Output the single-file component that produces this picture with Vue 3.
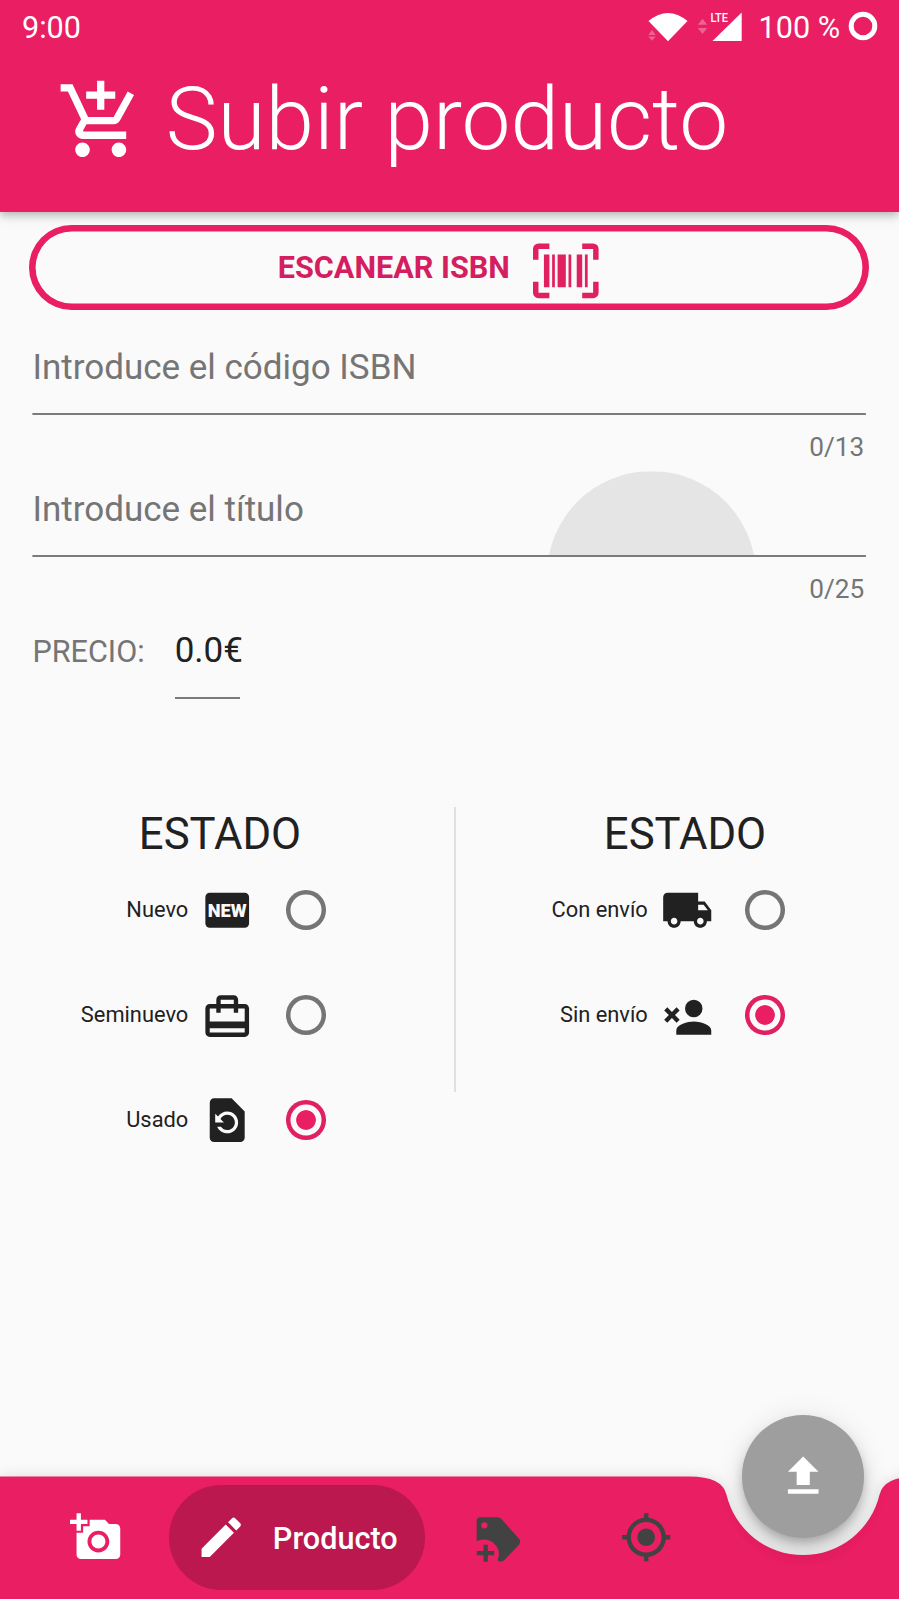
<script setup>
import { ref } from 'vue'

const condition = ref('usado')
const delivery = ref('sin')

const icons = {
  cart: 'M11 9h2V6h3V4h-3V1h-2v3H8v2h3v3zm-4 9c-1.1 0-1.99.9-1.99 2S5.9 22 7 22s2-.9 2-2-.9-2-2-2zm10 0c-1.1 0-1.99.9-1.99 2s.89 2 1.99 2 2-.9 2-2-.9-2-2-2zm-9.83-3.25l.03-.12.9-1.63h7.45c.75 0 1.41-.41 1.75-1.03l3.86-7.01L19.42 4h-.01l-1.1 2-2.76 5H8.53l-.13-.27L6.16 6l-.95-2-.94-2H1v2h2l3.6 7.59-1.35 2.45c-.16.28-.25.61-.25.96 0 1.1.9 2 2 2h12v-2H7.42c-.13 0-.25-.11-.25-.25z',
  barcode: 'M4,6H6V18H4V6M7,6H8V18H7V6M9,6H12V18H9V6M13,6H14V18H13V6M16,6H18V18H16V6M19,6H20V18H19V6M2,4V8H0V4A2,2 0 0,1 2,2H6V4H2M22,2A2,2 0 0,1 24,4V8H22V4H18V2H22M2,16V20H6V22H2A2,2 0 0,1 0,20V16H2M22,20V16H24V20A2,2 0 0,1 22,22H18V20H22Z',
  suitcase: 'M20 6h-3V4c0-1.11-.89-2-2-2H9c-1.11 0-2 .89-2 2v2H4c-1.11 0-2 .89-2 2v11c0 1.11.89 2 2 2h16c1.11 0 2-.89 2-2V8c0-1.11-.89-2-2-2zM9 4h6v2H9V4zm11 15H4v-2h16v2zm0-5H4V8h3v2h2V8h6v2h2V8h3v6z',
  restore: 'M14 2H6c-1.1 0-1.99.9-1.99 2L4 20c0 1.1.89 2 1.99 2H18c1.1 0 2-.9 2-2V8l-6-6zm-2 16c-2.05 0-3.81-1.24-4.58-3h1.71c.63.9 1.68 1.5 2.87 1.5 1.93 0 3.5-1.57 3.5-3.5S13.93 9.5 12 9.5c-1.35 0-2.52.78-3.1 1.9l1.6 1.6h-4V9l1.3 1.3C8.69 8.92 10.23 8 12 8c2.76 0 5 2.24 5 5s-2.24 5-5 5z',
  truck: 'M20 8h-3V4H3c-1.1 0-2 .9-2 2v11h2c0 1.66 1.34 3 3 3s3-1.34 3-3h6c0 1.66 1.34 3 3 3s3-1.34 3-3h2v-5l-3-4zM6 18.5c-.83 0-1.5-.67-1.5-1.5s.67-1.5 1.5-1.5 1.5.67 1.5 1.5-.67 1.5-1.5 1.5zm13.5-9l1.96 2.5H17V9.5h2.5zm-1.5 9c-.83 0-1.5-.67-1.5-1.5s.67-1.5 1.5-1.5 1.5.67 1.5 1.5-.67 1.5-1.5 1.5z',
  personRemove: 'M15,14C12.33,14 7,15.33 7,18V20H23V18C23,15.33 17.67,14 15,14M15,12A4,4 0 0,0 19,8A4,4 0 0,0 15,4A4,4 0 0,0 11,8A4,4 0 0,0 15,12M5,9.59L7.12,7.46L8.54,8.88L6.41,11L8.54,13.12L7.12,14.54L5,12.41L2.88,14.54L1.46,13.12L3.59,11L1.46,8.88L2.88,7.46L5,9.59Z',
  camera: 'M3 4V1h2v3h3v2H5v3H3V6H0V4h3zm3 6V7h3V4h7l1.83 2H21c1.1 0 2 .9 2 2v12c0 1.1-.9 2-2 2H5c-1.1 0-2-.9-2-2V10h3zm7 9c2.76 0 5-2.24 5-5s-2.24-5-5-5-5 2.24-5 5 2.24 5 5 5zm-3.2-5c0 1.77 1.43 3.2 3.2 3.2s3.2-1.43 3.2-3.2-1.43-3.2-3.2-3.2-3.2 1.43-3.2 3.2z',
  pencil: 'M3 17.25V21h3.75L17.81 9.94l-3.75-3.75L3 17.25zM20.71 7.04c.39-.39.39-1.02 0-1.41l-2.34-2.34c-.39-.39-1.02-.39-1.41 0l-1.83 1.83 3.75 3.75 1.83-1.83z',
  location: 'M12 8c-2.21 0-4 1.79-4 4s1.79 4 4 4 4-1.79 4-4-1.79-4-4-4zm8.94 3c-.46-4.17-3.77-7.48-7.94-7.94V1h-2v2.06C6.83 3.52 3.52 6.83 3.06 11H1v2h2.06c.46 4.17 3.77 7.48 7.94 7.94V23h2v-2.06c4.17-.46 7.48-3.77 7.94-7.94H23v-2h-2.06zM12 19c-3.87 0-7-3.13-7-7s3.13-7 7-7 7 3.13 7 7-3.13 7-7 7z',
  upload: 'M5 20h14v-2H5v2zm0-10h4v6h6v-6h4l-7-7-7 7z'
}

const conditions = [
  { id: 'nuevo', label: 'Nuevo', icon: null },
  { id: 'seminuevo', label: 'Seminuevo', icon: icons.suitcase, low: true },
  { id: 'usado', label: 'Usado', icon: icons.restore }
]
const deliveries = [
  { id: 'con', label: 'Con envío', icon: icons.truck },
  { id: 'sin', label: 'Sin envío', icon: icons.personRemove, low: true }
]
</script>

<template>
  <div class="screen">
    <header class="header">
      <div class="status">
        <span class="clock">9:00</span>
        <svg class="signals" width="104" height="40" viewBox="644 6 104 40">
          <path d="M648.5 21Q668 5 687.5 21L668 41.3Z" fill="#fff" />
          <path d="M648.3 35l3.7-5 3.7 5zM648.3 36.5h7.4l-3.7 4.3zM697.8 24.7l4.7-6 4.7 6zM697.8 28h9.4l-4.7 6z" fill="#fff" opacity=".3" />
          <path d="M741.7 12.5V41H712.5Z" fill="#fff" />
          <text class="lte" x="710.5" y="22.3" textLength="17.5" lengthAdjust="spacingAndGlyphs">LTE</text>
        </svg>
        <span class="battery">100 %</span>
        <svg class="ring" width="30" height="30" viewBox="0 0 30 30">
          <circle cx="15" cy="15" r="11.8" fill="none" stroke="#fff" stroke-width="5" />
        </svg>
      </div>
      <div class="heading">
        <svg class="cart" viewBox="0 0 24 24"><path :d="icons.cart" /></svg>
        <h1>Subir producto</h1>
      </div>
    </header>

    <main class="body">
      <button class="scan">
        <span>ESCANEAR ISBN</span>
        <svg viewBox="0 0 24 24"><path :d="icons.barcode" /></svg>
      </button>

      <div class="field">
        <div class="input"><span class="isbn-hint">Introduce el código ISBN</span></div>
        <div class="counter">0/13</div>
      </div>
      <div class="field">
        <div class="input">
          <i class="ripple"></i>
          <span class="title-hint">Introduce el título</span>
        </div>
        <div class="counter">0/25</div>
      </div>
      <div class="price">
        <label>PRECIO:</label>
        <div class="amount">0.0€</div>
      </div>

      <div class="options">
        <section class="group">
          <h2>ESTADO</h2>
          <div v-for="o in conditions" :key="o.id" class="option" @click="condition = o.id">
            <span class="label">{{ o.label }}</span>
            <svg v-if="o.icon" class="icon" :class="{ low: o.low }" viewBox="0 0 24 24"><path :d="o.icon" /></svg>
            <svg v-else class="icon" viewBox="0 0 24 24">
              <rect x="2" y="4" width="20" height="16" rx="2" />
              <text class="new" x="3.1" y="15" textLength="17.8" lengthAdjust="spacingAndGlyphs">NEW</text>
            </svg>
            <i class="radio" :class="{ on: condition === o.id }"></i>
          </div>
        </section>
        <div class="divider"></div>
        <section class="group delivery">
          <h2>ESTADO</h2>
          <div v-for="o in deliveries" :key="o.id" class="option" @click="delivery = o.id">
            <span class="label">{{ o.label }}</span>
            <svg class="icon" :class="{ low: o.low }" viewBox="0 0 24 24"><path :d="o.icon" /></svg>
            <i class="radio" :class="{ on: delivery === o.id }"></i>
          </div>
        </section>
      </div>
    </main>

    <footer class="bar">
      <svg class="bar-shape" viewBox="0 0 899 123">
        <path d="M0 .5H689.4Q722.15 .5 726.5 18.7A78.66 78.66 0 0 0 879.5 18.7Q883.85 .5 916.6 .5V123H0Z" />
      </svg>
      <nav class="nav">
        <svg class="nav-icon light" viewBox="0 0 24 24"><path :d="icons.camera" /></svg>
        <div class="selected">
          <svg class="nav-icon light" viewBox="0 0 24 24"><path :d="icons.pencil" /></svg>
          <span>Producto</span>
        </div>
        <svg class="nav-icon tag" viewBox="66 334 157.3 157.3">
          <path fill-rule="evenodd" d="M92 353H142Q149 353 154 358L207 417Q214 426 207 435L164 480Q155 489 145 484Q142 480 145 473Q150 459 141 442Q130 424 110 420Q94 418 80 424V365Q80 353 92 353ZM103 367.500A9.500 9.500 0 1 0 103 386.500A9.500 9.500 0 1 0 103 367.500Z" />
          <path d="M100.500 435h13v19h19v13h-19v19h-13v-19h-20v-13h20z" />
        </svg>
        <svg class="nav-icon locate" viewBox="0 0 24 24"><path :d="icons.location" /></svg>
      </nav>
      <button class="fab">
        <svg viewBox="0 0 24 24"><path :d="icons.upload" /></svg>
      </button>
    </footer>
  </div>
</template>

<style>
body {
  margin: 0;
  background: #fafafa;
}
</style>

<style scoped>
.screen {
  width: 899px;
  height: 1599px;
  display: flex;
  flex-direction: column;
  overflow: hidden;
  background: #fafafa;
  color: #212121;
  font-family: Roboto, "Noto Sans", sans-serif;
}
button {
  font: inherit;
  margin: 0;
  cursor: pointer;
}
.header {
  height: 212px;
  flex: none;
  box-sizing: border-box;
  background: #e91e63;
  color: #fff;
  box-shadow: 0 3px 8px rgba(0, 0, 0, 0.24), 0 8px 12px rgba(0, 0, 0, 0.05);
}
.status {
  height: 54px;
  display: flex;
  align-items: center;
  padding: 0 21px 0 22px;
  font-size: 30.6px;
  line-height: 56px;
}
.clock {
  flex: 1;
  padding-top: 2px;
}
.battery {
  width: 81px;
  margin-left: 10.500px;
  padding-top: 2px;
  white-space: nowrap;
}
.signals {
  margin-top: -2px;
}
.ring {
  margin: -2px 0 0 8.500px;
}
.lte {
  fill: #fff;
  font-size: 13.500px;
  font-weight: 500;
}
.heading {
  display: flex;
  align-items: center;
  padding-left: 57.200px;
  height: 134px;
}
.cart {
  width: 87.4px;
  height: 87.4px;
  fill: #fff;
}
h1 {
  margin: -4px 0 0 21.200px;
  font-size: 87.4px;
  line-height: 100px;
  font-weight: 300;
  white-space: nowrap;
}
.body {
  flex: 1;
  padding: 12.800px 30px 0 29px;
}
.scan {
  width: 840px;
  height: 85px;
  box-sizing: border-box;
  display: flex;
  align-items: center;
  padding: 0 0 0 248.800px;
  border: 0;
  border-radius: 43px;
  box-shadow: inset 0 0 0 6.600px #e91e63;
  background: transparent;
  color: #d41e60;
  font-size: 30.6px;
  font-weight: 700;
}
.scan svg {
  width: 65.600px;
  height: 65.600px;
  margin: 6px 0 0 23.500px;
  fill: #e0205f;
}
.scan span {
  white-space: nowrap;
}
.field,
.price {
  margin-left: 3.400px;
}
.field {
  width: 833.500px;
  height: 142px;
  color: #757575;
}
.scan + .field {
  margin-top: 22.200px;
}
.input {
  position: relative;
  height: 83px;
  box-sizing: border-box;
  clip-path: inset(-10px 0 0 0);
  border-bottom: 2px solid #7b7b7b;
  font-size: 35px;
  line-height: 71px;
}
.input span {
  position: relative;
}
.ripple {
  position: absolute;
  left: 515px;
  top: -2.500px;
  width: 208.800px;
  height: 208.800px;
  border-radius: 50%;
  background: #e5e5e5;
  clip-path: inset(0 0 125.300px 0);
}
.counter {
  height: 59px;
  line-height: 64px;
  font-size: 26.200px;
  text-align: right;
  padding-right: 1.600px;
  box-sizing: border-box;
}
.price {
  display: flex;
  height: 83px;
}
.price label {
  width: 142.300px;
  color: #757575;
  font-size: 30.6px;
  line-height: 71px;
}
.amount {
  width: 65.500px;
  height: 83px;
  box-sizing: border-box;
  border-bottom: 2px solid #7b7b7b;
  font-size: 35px;
  line-height: 70px;
  white-space: nowrap;
}
.options {
  display: flex;
  margin: 108px -30px 0 -29px;
}
.group {
  flex: none;
  width: 453.500px;
}
.group.delivery {
  margin-left: 4px;
}
.divider {
  flex: none;
  width: 2px;
  height: 285px;
  background: #e0e0e0;
}
h2 {
  width: 440px;
  margin: 0;
  font-size: 43.700px;
  line-height: 54px;
  font-weight: 400;
  text-align: center;
}
.delivery h2 {
  width: 451px;
}
.option {
  height: 105px;
  display: flex;
  align-items: center;
}
h2 + .option {
  margin-top: -3.500px;
}
.label {
  width: 188.300px;
  text-align: right;
  font-size: 21.850px;
  line-height: 30px;
}
.icon {
  width: 52.440px;
  height: 52.440px;
  margin-left: 12.800px;
  fill: #212121;
}
.icon.low {
  margin-top: 4.600px;
}
.new {
  fill: #fafafa;
  font-size: 8.200px;
  font-weight: 900;
}
.radio {
  width: 39.600px;
  height: 39.600px;
  margin-left: 32.400px;
  box-shadow: inset 0 0 0 4.500px #757575;
  border-radius: 50%;
}
.radio.on {
  box-shadow: inset 0 0 0 4.500px #e0205f;
  background: radial-gradient(circle, #e91e63 9.400px, transparent 10.200px);
}
.bar {
  position: relative;
  flex: none;
  height: 123px;
}
.bar-shape {
  display: block;
  width: 899px;
  height: 123px;
  overflow: visible;
  fill: #e91e63;
  filter: drop-shadow(0 0 7px rgba(0, 0, 0, 0.12));
}
.nav {
  position: absolute;
  inset: 0;
  display: flex;
  align-items: center;
  padding-left: 69.800px;
}
.nav-icon {
  width: 52.440px;
  height: 52.440px;
  flex: none;
  fill: #424242;
}
.nav-icon.light {
  fill: #fff;
}
.selected {
  width: 256px;
  height: 105px;
  box-sizing: border-box;
  margin-left: 47.200px;
  padding-left: 25.500px;
  display: flex;
  align-items: center;
  border-radius: 53px;
  background: #ba184f;
  color: #fff;
  font-size: 30.6px;
  font-weight: 500;
}
.selected span {
  margin: 2px 0 0 25.500px;
}
.tag {
  margin-left: 46.600px;
}
.locate {
  margin-left: 95.300px;
}
.fab {
  position: absolute;
  left: 741.600px;
  top: -60.800px;
  width: 122.400px;
  height: 122.400px;
  padding: 0;
  display: flex;
  align-items: center;
  justify-content: center;
  border: 0;
  border-radius: 50%;
  background: #9e9e9e;
  box-shadow: 0 7px 11px -2px rgba(0, 0, 0, 0.22), 0 12px 20px rgba(0, 0, 0, 0.12), 0 2px 30px rgba(0, 0, 0, 0.09);
}
.fab svg {
  width: 52.440px;
  height: 52.440px;
  fill: #fff;
}
</style>
